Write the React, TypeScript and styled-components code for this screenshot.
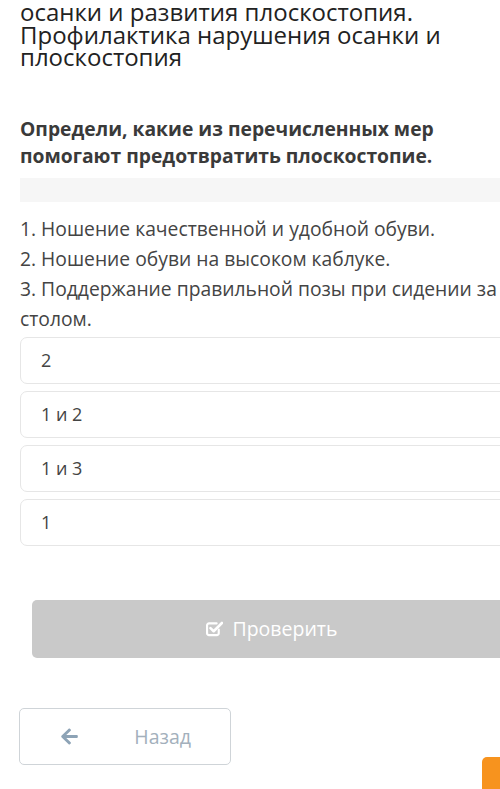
import React from 'react'
import styled, { createGlobalStyle } from 'styled-components'
import { FaArrowLeft } from 'react-icons/fa'

const GlobalStyle = createGlobalStyle`
  html, body {
    margin: 0;
    padding: 0;
    background: #fff;
    overflow: hidden;
  }
  body {
    font-family: "Open Sans", "Liberation Sans", sans-serif;
  }
`

const Page = styled.div`
  width: 504px;
  padding-left: 20px;
`

const Title = styled.h1`
  margin: 0;
  padding-top: 1px;
  font-size: 24px;
  line-height: 22.5px;
  font-weight: 400;
  color: #222;
  width: 470px;
`

const Question = styled.h2`
  margin: 46px 0 0;
  font-size: 19.3px;
  line-height: 27px;
  font-weight: 700;
  color: #3a3a3a;
`

const GreyBar = styled.div`
  margin-top: 9px;
  height: 24px;
  background: #f6f6f6;
`

const Statements = styled.ol`
  list-style: none;
  margin: 12px 0 0;
  padding: 0;
`

const Statement = styled.li`
  font-size: 19.3px;
  line-height: 30px;
  color: #444;
`

const Options = styled.div`
  margin-top: 3px;
  display: flex;
  flex-direction: column;
  gap: 7px;
`

const Option = styled.label`
  display: flex;
  align-items: center;
  height: 47px;
  box-sizing: border-box;
  padding-left: 20px;
  border: 1px solid #e6e6e6;
  border-radius: 7px;
  font-size: 18px;
  color: #444;
`

const CheckButton = styled.button`
  margin: 54px 12px 0;
  width: 480px;
  height: 58px;
  border: none;
  border-radius: 5px;
  background: #c9c9c9;
  color: #fff;
  font-family: inherit;
  font-size: 19.5px;
  display: flex;
  align-items: center;
  justify-content: center;
  gap: 9px;
`

const Footer = styled.div`
  margin-top: 50px;
  display: flex;
  justify-content: space-between;
  align-items: flex-start;
`

const BackButton = styled.button<{ $width: number }>`
  width: ${p => p.$width}px;
  height: 57px;
  box-sizing: border-box;
  margin-left: -1px;
  padding: 0 39px 0 40px;
  display: flex;
  align-items: center;
  justify-content: space-between;
  background: #fff;
  border: 1px solid #cfd4d8;
  border-radius: 5px;
  color: #a3b0bc;
  font-family: inherit;
  font-size: 19.5px;
  & svg {
    color: #8da3b6;
    width: 19px;
    height: 19px;
  }
`

const NextButton = styled.div`
  margin-top: 49px;
  width: 42px;
  height: 40px;
  border-radius: 5px 0 0 0;
  background: #f7931e;
`

// check-square-o, drawn by hand (the check runs out of the box top right)
const CheckSquareIcon = () => (
  <svg width="17" height="17" viewBox="0 0 16 16" fill="none">
    <path
      d="M12 9v3.4a1.8 1.8 0 0 1-1.8 1.8H2.8A1.8 1.8 0 0 1 1 12.4V5A1.8 1.8 0 0 1 2.8 3.2H10"
      stroke="#fff"
      strokeWidth="2"
      strokeLinecap="round"
    />
    <path d="M4.2 7.6l3 3L15 2.8" stroke="#fff" strokeWidth="2.4" strokeLinecap="round" strokeLinejoin="round" />
  </svg>
)

const statements = [
  '1. Ношение качественной и удобной обуви.',
  '2. Ношение обуви на высоком каблуке.',
  '3. Поддержание правильной позы при сидении за столом.',
]

const options = ['2', '1 и 2', '1 и 3', '1']

export default function App() {
  return (
    <Page>
      <GlobalStyle />
      <Title>осанки и развития плоскостопия. Профилактика нарушения осанки и плоскостопия</Title>
      <Question>Определи, какие из перечисленных мер помогают предотвратить плоскостопие.</Question>
      <GreyBar />
      <Statements>
        {statements.map(s => (
          <Statement key={s}>{s}</Statement>
        ))}
      </Statements>
      <Options>
        {options.map(o => (
          <Option key={o}>{o}</Option>
        ))}
      </Options>
      <CheckButton>
        <CheckSquareIcon />
        Проверить
      </CheckButton>
      <Footer>
        <BackButton $width={212}>
          <FaArrowLeft />
          Назад
        </BackButton>
        <NextButton />
      </Footer>
    </Page>
  )
}
